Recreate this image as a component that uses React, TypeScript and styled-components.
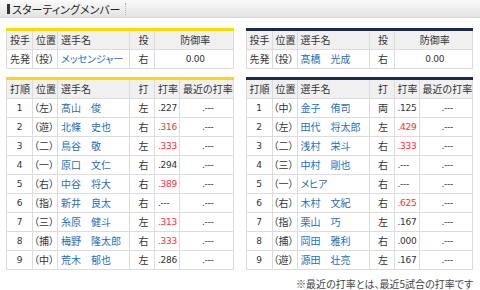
import styled, { createGlobalStyle } from "styled-components";

const GlobalStyle = createGlobalStyle`
  html, body {
    margin: 0;
    padding: 0;
    background: #fff;
  }
  body {
    font-family: "Noto Sans CJK JP", "Noto Sans", sans-serif;
    font-feature-settings: "palt";
    color: #333;
  }
`;

type Batter = {
  order: number;
  pos: string;
  name: string;
  hand: string;
  avg: string;
  hot?: boolean;
};

type Side = {
  color: string;
  pitcher: { role: string; pos: string; name: string; hand: string; era: string };
  batters: Batter[];
};

const tigers: Side = {
  color: "#ffd800",
  pitcher: { role: "先発", pos: "（投）", name: "メッセンジャー", hand: "右", era: "0.00" },
  batters: [
    { order: 1, pos: "（左）", name: "髙山　俊", hand: "左", avg: ".227" },
    { order: 2, pos: "（遊）", name: "北條　史也", hand: "右", avg: ".316", hot: true },
    { order: 3, pos: "（二）", name: "鳥谷　敬", hand: "左", avg: ".333", hot: true },
    { order: 4, pos: "（一）", name: "原口　文仁", hand: "右", avg: ".294" },
    { order: 5, pos: "（右）", name: "中谷　将大", hand: "右", avg: ".389", hot: true },
    { order: 6, pos: "（指）", name: "新井　良太", hand: "右", avg: ".---" },
    { order: 7, pos: "（三）", name: "糸原　健斗", hand: "左", avg: ".313", hot: true },
    { order: 8, pos: "（捕）", name: "梅野　隆太郎", hand: "右", avg: ".333", hot: true },
    { order: 9, pos: "（中）", name: "荒木　郁也", hand: "左", avg: ".286" },
  ],
};

const lions: Side = {
  color: "#1c2b4b",
  pitcher: { role: "先発", pos: "（投）", name: "髙橋　光成", hand: "右", era: "0.00" },
  batters: [
    { order: 1, pos: "（中）", name: "金子　侑司", hand: "両", avg: ".125" },
    { order: 2, pos: "（左）", name: "田代　将太郎", hand: "左", avg: ".429", hot: true },
    { order: 3, pos: "（二）", name: "浅村　栄斗", hand: "右", avg: ".333", hot: true },
    { order: 4, pos: "（三）", name: "中村　剛也", hand: "右", avg: ".---" },
    { order: 5, pos: "（一）", name: "メヒア", hand: "右", avg: ".---" },
    { order: 6, pos: "（右）", name: "木村　文紀", hand: "右", avg: ".625", hot: true },
    { order: 7, pos: "（指）", name: "栗山　巧", hand: "左", avg: ".167" },
    { order: 8, pos: "（捕）", name: "岡田　雅利", hand: "右", avg: ".000" },
    { order: 9, pos: "（遊）", name: "源田　壮亮", hand: "左", avg: ".167" },
  ],
};

const Page = styled.div`
  width: 480px;
  height: 290px;
  overflow: hidden;
`;

const TitleBar = styled.div`
  height: 17px;
  display: flex;
  align-items: center;
  padding-left: 7px;
  background: linear-gradient(#fafafa, #e3e3e3);
  border-bottom: 1px solid #d6d6d6;
`;

const TitleMark = styled.span`
  width: 3px;
  height: 10px;
  background: #333;
  margin-right: 2px;
`;

const TitleText = styled.span`
  font-size: 11px;
  line-height: 12px;
  color: #222;
  padding-right: 4px;
  border-right: 1px dotted #b5b5b5;
`;

const Body = styled.div`
  padding: 10px 7px 0 6px;
`;

const Columns = styled.div`
  display: flex;
  gap: 12px;
  margin-bottom: 8px;
`;

const Table = styled.table<{ $accent: string }>`
  width: 228px;
  border-collapse: collapse;
  table-layout: fixed;
  border-top: 3px solid ${(p) => p.$accent};
  font-size: 10px;
`;

const Th = styled.th<{ $align?: string }>`
  height: 18px;
  padding: 0 0 0 3px;
  background: #f0f0f0;
  border: 1px solid #dcdcdc;
  border-top: none;
  font-weight: normal;
  color: #333;
  text-align: ${(p) => p.$align || "left"};
  white-space: nowrap;
  line-height: 18px;
`;

const Td = styled.td<{ $align?: string; $color?: string }>`
  height: 18px;
  padding: 0 0 0 3px;
  border: 1px solid #dcdcdc;
  text-align: ${(p) => p.$align || "left"};
  color: ${(p) => p.$color || "#333"};
  white-space: nowrap;
  line-height: 18px;
`;

const Pos = styled(Td)`
  padding-left: 1px;
`;

const Num = styled(Td)`
  font-family: "DejaVu Sans", "Noto Sans", sans-serif;
  font-size: 9px;
  letter-spacing: -0.3px;
`;

const Name = styled.a`
  color: #1f6fb5;
  text-decoration: none;
`;

const Note = styled.div`
  text-align: right;
  font-size: 10px;
  line-height: 13px;
  color: #444;
  margin-top: -1px;
`;

function PitcherTable({ side }: { side: Side }) {
  const p = side.pitcher;
  return (
    <Table $accent={side.color}>
      <colgroup>
        <col style={{ width: 26 }} />
        <col style={{ width: 25 }} />
        <col style={{ width: 72 }} />
        <col style={{ width: 25 }} />
        <col />
      </colgroup>
      <thead>
        <tr>
          <Th>投手</Th>
          <Th>位置</Th>
          <Th>選手名</Th>
          <Th $align="center">投</Th>
          <Th $align="center">防御率</Th>
        </tr>
      </thead>
      <tbody>
        <tr>
          <Td>{p.role}</Td>
          <Pos>{p.pos}</Pos>
          <Td>
            <Name>{p.name}</Name>
          </Td>
          <Td $align="center">{p.hand}</Td>
          <Num $align="center">{p.era}</Num>
        </tr>
      </tbody>
    </Table>
  );
}

function BatterTable({ side }: { side: Side }) {
  return (
    <Table $accent={side.color}>
      <colgroup>
        <col style={{ width: 26 }} />
        <col style={{ width: 25 }} />
        <col style={{ width: 72 }} />
        <col style={{ width: 25 }} />
        <col style={{ width: 25 }} />
        <col />
      </colgroup>
      <thead>
        <tr>
          <Th>打順</Th>
          <Th>位置</Th>
          <Th>選手名</Th>
          <Th $align="center">打</Th>
          <Th>打率</Th>
          <Th>最近の打率</Th>
        </tr>
      </thead>
      <tbody>
        {side.batters.map((b) => (
          <tr key={b.order}>
            <Num $align="center" style={{ paddingLeft: 0 }}>
              {b.order}
            </Num>
            <Pos>{b.pos}</Pos>
            <Td>
              <Name>{b.name}</Name>
            </Td>
            <Td $align="center">{b.hand}</Td>
            <Num $color={b.hot ? "#ff3030" : "#333"}>{b.avg}</Num>
            <Num $align="center">.---</Num>
          </tr>
        ))}
      </tbody>
    </Table>
  );
}

export default function App() {
  return (
    <Page>
      <GlobalStyle />
      <TitleBar>
        <TitleMark />
        <TitleText>スターティングメンバー</TitleText>
      </TitleBar>
      <Body>
        <Columns>
          <PitcherTable side={tigers} />
          <PitcherTable side={lions} />
        </Columns>
        <Columns>
          <BatterTable side={tigers} />
          <BatterTable side={lions} />
        </Columns>
        <Note>※最近の打率とは、最近5試合の打率です</Note>
      </Body>
    </Page>
  );
}
